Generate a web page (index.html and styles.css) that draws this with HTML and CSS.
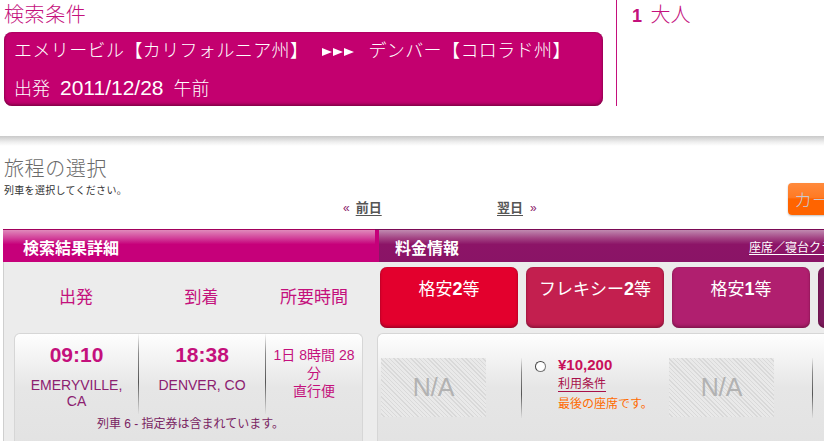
FILE: index.html
```html
<!DOCTYPE html>
<html lang="ja">
<head>
<meta charset="utf-8">
<title>旅程の選択</title>
<link rel="stylesheet" href="styles.css">
</head>
<body>
<div class="page">
  <section class="top">
    <div class="cond">
      <div class="cond-title">検索条件</div>
      <div class="route-box">
        <div class="route">エメリービル【カリフォルニア州】<svg class="arrows" width="32" height="8" viewBox="0 0 32 8"><path d="M0 0L10 4L0 8Z M11 0L21 4L11 8Z M22 0L32 4L22 8Z" fill="#fff"/></svg>デンバー【コロラド州】</div>
        <div class="depart">出発<span class="num">2011/12/28</span>午前</div>
      </div>
    </div>
    <div class="divider"></div>
    <div class="pax"><b class="num">1</b> 大人</div>
  </section>
  <div class="shadow"></div>
  <section class="itin">
    <h1 class="itin-title">旅程の選択</h1>
    <p class="itin-sub">列車を選択してください。</p>
    <div class="nav">
      <div class="prev"><span class="chev">&laquo;</span><a href="#">前日</a></div>
      <div class="next"><a href="#">翌日</a><span class="chev">&raquo;</span></div>
    </div>
    <div class="orange-btn">カー</div>
  </section>
  <section class="results">
    <div class="left">
      <div class="hdr hdr-left">検索結果詳細</div>
      <div class="cols">
        <div>出発</div>
        <div>到着</div>
        <div>所要時間</div>
      </div>
      <div class="card">
        <div class="card-row">
          <div class="cell">
            <div class="time">09:10</div>
            <div class="city">EMERYVILLE,<br>CA</div>
          </div>
          <div class="cell sep">
            <div class="time">18:38</div>
            <div class="city">DENVER, CO</div>
          </div>
          <div class="cell sep dur">1日 8時間 28<br>分<br>直行便</div>
        </div>
        <div class="note">列車 6 - 指定券は含まれています。</div>
      </div>
    </div>
    <div class="right">
      <div class="hdr hdr-right"><span class="hdr-title">料金情報</span><a href="#" class="hdr-link">座席／寝台クラス</a></div>
      <div class="fare-tabs">
        <div class="tab t1">格安<b>2</b>等</div>
        <div class="tab t2">フレキシー<b>2</b>等</div>
        <div class="tab t3">格安<b>1</b>等</div>
        <div class="tab t4">フレキシー<b>1</b>等</div>
      </div>
      <div class="fare-card">
        <div class="fare-row">
          <div class="fcell c1 vsep"><div class="na">N/A</div></div>
          <div class="fcell c2">
            <span class="radio"></span>
            <div class="price-box">
              <div class="price">¥10,200</div>
              <a href="#" class="terms">利用条件</a>
              <div class="last">最後の座席です。</div>
            </div>
          </div>
          <div class="fcell c3 vsep"><div class="na">N/A</div></div>
          <div class="fcell c4"></div>
        </div>
      </div>
    </div>
  </section>
</div>
</body>
</html>
```
FILE: styles.css
```css
html, body {
  margin: 0;
  padding: 0;
  background: #fff;
}
body {
  width: 824px;
  height: 441px;
  overflow: hidden;
  font-family: "Liberation Sans", "Noto Sans CJK JP", sans-serif;
}
.page {
  width: 824px;
  height: 441px;
  overflow: hidden;
  position: relative;
}
.num { font-family: "Liberation Sans", Arial, sans-serif; }

/* top */
.top {
  display: flex;
  height: 136px;
}
.cond {
  width: 608px;
  padding: 3px 0 0 4px;
}
.cond-title {
  font-family: "Noto Sans CJK JP", sans-serif;
  font-weight: 300;
  font-size: 20px;
  line-height: 22px;
  color: #c4107c;
  letter-spacing: 0.6px;
}
.route-box {
  margin-top: 7px;
  width: 599px;
  height: 74px;
  padding: 6px 0 0 10px;
  box-sizing: border-box;
  background: #c3006f;
  border-radius: 8px;
  color: #fff;
  box-shadow: inset 0 -2px 3px rgba(80, 0, 40, 0.45), inset 0 0 2px rgba(80, 0, 40, 0.5);
  font-size: 18px;
  font-family: "Noto Sans CJK JP", sans-serif;
  font-weight: 300;
}
.route { line-height: 22px; white-space: nowrap; letter-spacing: 0.4px; }
.arrows { margin: 0 14px 0 14px; vertical-align: 1px; }
.depart { line-height: 22px; margin-top: 16px; }
.depart .num { font-size: 21px; margin: 0 10px 0 10px; }
.divider {
  width: 1px;
  height: 106px;
  background: #c4107c;
  margin-left: 4px;
}
.pax {
  padding: 3px 0 0 15px;
  font-size: 20px;
  line-height: 22px;
  color: #c4107c;
  font-family: "Noto Sans CJK JP", sans-serif;
  font-weight: 300;
}
.pax .num { font-weight: bold; font-size: 18px; margin-right: 4px; }

.shadow {
  height: 10px;
  background: linear-gradient(#c9c9c9, #eeeeee 60%, #fff);
}

/* itinerary */
.itin {
  position: relative;
  height: 83px;
  padding: 11px 0 0 4px;
  box-sizing: border-box;
}
.itin-title {
  margin: 0;
  font-family: "Noto Sans CJK JP", sans-serif;
  font-weight: 300;
  font-size: 20px;
  line-height: 22px;
  color: #6a6a6a;
  letter-spacing: 0.6px;
}
.itin-sub {
  margin: 4px 0 0;
  font-family: "Noto Sans CJK JP", sans-serif;
  font-size: 10px;
  line-height: 14px;
  color: #333;
  letter-spacing: 0.3px;
}
.nav {
  display: flex;
  margin-top: 3px;
  padding-left: 339px;
  font-size: 13px;
  line-height: 14px;
}
.nav a {
  color: #555;
  font-weight: bold;
  text-decoration: underline;
  text-underline-offset: 3px;
  font-family: "Noto Sans CJK JP", sans-serif;
}
.chev { color: #8a1a6a; font-size: 12px; }
.prev { width: 154px; }
.prev .chev { margin-right: 6px; }
.next .chev { margin-left: 7px; }
.orange-btn {
  position: absolute;
  left: 788px;
  top: 37px;
  width: 60px;
  height: 32px;
  border-radius: 4px;
  background: linear-gradient(#ff8a3c 0, #ff7a24 45%, #ff6400 50%, #ff6400 100%);
  box-shadow: 0 1px 2px rgba(0,0,0,0.25);
  color: #c9c9d2;
  font-family: "Noto Sans CJK JP", sans-serif;
  font-weight: 300;
  font-size: 18px;
  line-height: 32px;
  padding-left: 6px;
  box-sizing: border-box;
}

/* results */
.results {
  display: flex;
  margin-left: 3px;
  height: 212px;
}
.hdr {
  height: 33px;
  box-sizing: border-box;
  color: #fff;
  font-family: "Noto Sans CJK JP", sans-serif;
  font-weight: bold;
  font-size: 16px;
  line-height: 34px;
}
.left {
  width: 372px;
  flex: none;
  background: #ececec;
  border-left: 1px solid #cfcfcf;
  box-sizing: border-box;
}
.hdr-left {
  margin-left: -1px;
  width: 373px;
  padding-left: 20px;
  border-top: 1px solid #a2005c;
  background: linear-gradient(#e08abb 0, #d2419a 25%, #c6007a 45%, #c6007a 100%);
}
.cols {
  display: grid;
  grid-template-columns: 124px 127px 98px;
  padding: 24px 0 0 10px;
  font-family: "Noto Sans CJK JP", sans-serif;
  font-size: 17px;
  line-height: 20px;
  color: #c4107c;
  text-align: center;
}
.card {
  margin: 27px 0 0 10px;
  width: 349px;
  height: 120px;
  box-sizing: border-box;
  border: 1px solid #d6d6d6;
  border-bottom: none;
  border-radius: 6px 6px 0 0;
  background: linear-gradient(#fefefe, #e6e6e6 45%, #e2e2e2);
}
.card-row {
  display: grid;
  grid-template-columns: 123px 127px 97px;
  height: 80px;
}
.cell {
  text-align: center;
  padding-top: 9px;
}
.sep {
  border-left: 1px solid transparent;
  border-image: linear-gradient(rgba(0,0,0,0) 0, #8a8a8a 25%, #555 60%, rgba(0,0,0,0) 100%) 1;
}
.time {
  font-weight: bold;
  font-size: 21px;
  line-height: 24px;
  color: #c4107c;
}
.city {
  margin-top: 10px;
  font-size: 14px;
  line-height: 16px;
  color: #8c2070;
}
.dur {
  padding-top: 12px;
  font-size: 14px;
  line-height: 18px;
  color: #c4107c;
  font-family: "Liberation Sans", "Noto Sans CJK JP", sans-serif;
}
.note {
  text-align: center;
  font-size: 12px;
  line-height: 16px;
  margin-top: 2px;
  color: #7a2462;
  padding-left: 4px;
}

.right {
  width: 520px;
  flex: none;
  background: #ececec;
}
.hdr-right {
  display: flex;
  border-top: 1px solid #7a0a55;
  background: linear-gradient(#c08ab0 0, #a34484 25%, #8c1467 45%, #8a1466 100%);
  box-shadow: inset 4px 0 0 #c6007a;
}
.hdr-title { width: 354px; padding-left: 20px; flex: none; }
.hdr-link {
  color: #fff;
  font-weight: normal;
  font-size: 12px;
  line-height: 34px;
  white-space: nowrap;
  text-decoration: underline;
  text-underline-offset: 2px;
}
.fare-tabs {
  display: flex;
  gap: 8px;
  padding: 5px 0 0 5px;
}
.tab {
  width: 138px;
  height: 61px;
  flex: none;
  box-sizing: border-box;
  border-radius: 7px;
  padding-top: 10px;
  text-align: center;
  color: #fff;
  font-family: "Noto Sans CJK JP", sans-serif;
  font-size: 17px;
  line-height: 22px;
  box-shadow: inset 0 -2px 3px rgba(60, 0, 30, 0.35), inset 0 0 1px rgba(60,0,30,0.5);
}
.tab b { font-family: "Liberation Sans", Arial, sans-serif; font-size: 18px; }
.t1 { background: #e3002d; }
.t2 { background: #c31f4f; }
.t3 { background: #b01f6f; }
.t4 { background: #7c1a5c; }
.fare-card {
  margin: 5px 0 0 2px;
  height: 120px;
  box-sizing: border-box;
  border: 1px solid #d6d6d6;
  border-right: none;
  border-bottom: none;
  border-radius: 6px 0 0 0;
  background: linear-gradient(#fefefe, #e6e6e6 45%, #e2e2e2);
}
.fare-row {
  display: flex;
  padding: 24px 0 0 3px;
}
.fcell { flex: none; height: 60px; }
.c1 { width: 141px; }
.c2 { width: 147px; display: flex; padding-left: 13px; box-sizing: border-box; margin-top: -2px; height: 62px; }
.c3 { width: 144px; }
.c4 { width: 40px; }
.vsep {
  border-right: 1px solid transparent;
  border-image: linear-gradient(rgba(0,0,0,0) 0, #8a8a8a 25%, #555 60%, rgba(0,0,0,0) 100%) 1;
  box-sizing: border-box;
}
.na {
  width: 105px;
  height: 59px;
  background: repeating-linear-gradient(45deg, #e9e9e9 0 2px, #d9d9d9 2px 3px);
  color: #b2b2b2;
  font-size: 25px;
  line-height: 59px;
  text-align: center;
}
.radio {
  width: 9px;
  height: 9px;
  margin-top: 5px;
  border-radius: 50%;
  border: 1px solid #777;
  border-left-color: #444;
  border-top-color: #444;
  background: #fff;
  flex: none;
}
.price-box {
  margin-left: 12px;
}
.price {
  font-weight: bold;
  font-size: 15px;
  line-height: 18px;
  color: #c8105a;
}
.terms {
  display: inline-block;
  font-family: "Noto Sans CJK JP", sans-serif;
  font-size: 12px;
  line-height: 18px;
  color: #a8104a;
  text-decoration: underline;
  text-underline-offset: 3px;
}
.last {
  font-family: "Noto Sans CJK JP", sans-serif;
  font-size: 12px;
  line-height: 22px;
  color: #ff6a00;
  white-space: nowrap;
}
```
